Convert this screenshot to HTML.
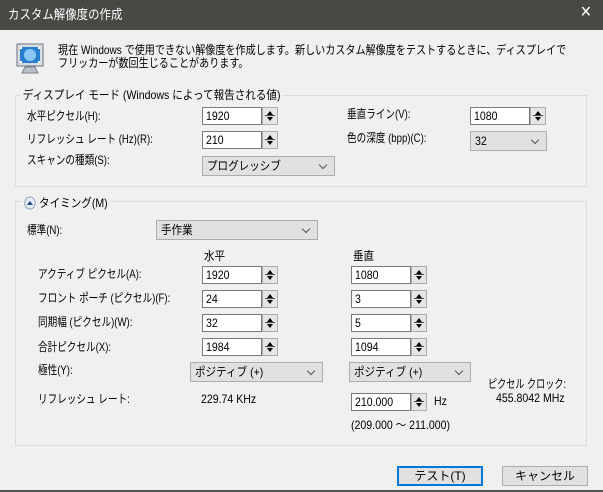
<!DOCTYPE html>
<html><head><meta charset="utf-8"><style>
*{margin:0;padding:0;box-sizing:border-box}
body{width:603px;height:492px;background:#f0f0f0;font-family:"Liberation Sans","Noto Sans CJK JP",sans-serif;font-size:12px;color:#000;position:relative;overflow:hidden}
.a{position:absolute;white-space:nowrap;line-height:14px;transform:scaleX(.88);transform-origin:left}
.n{transform:scaleX(.8)}
.tb{position:absolute;left:0;top:0;width:603px;height:30px;background:#4a4845;color:#fff;font-size:13px}
.grp{position:absolute;border:1px solid #dcdcdc}
.in{position:absolute;background:#fff;border:1px solid #7a7a7a;height:18px;padding-left:3px;line-height:16px}
.in span,.cb span{display:inline-block;transform:scaleX(.88);transform-origin:left}
.sp{position:absolute;width:16px;height:18px;border:1px solid #adadad;background:#e5e5e5}
.sp:before{content:"";position:absolute;left:4px;top:3px;border-left:3px solid transparent;border-right:3px solid transparent;border-bottom:4px solid #000}
.sp:after{content:"";position:absolute;left:4px;top:9px;border-left:3px solid transparent;border-right:3px solid transparent;border-top:4px solid #000}
.sp i{position:absolute;left:2px;right:2px;top:7px;height:1px;background:#444}
.cb{position:absolute;background:#e1e1e1;border:1px solid #adadad;height:20px;padding-left:4px;line-height:18px}
.cb:after{content:"";position:absolute;right:8px;top:5px;width:5px;height:5px;border-right:1px solid #555;border-bottom:1px solid #555;transform:rotate(45deg)}
.btn{position:absolute;height:20px;background:#e1e1e1;border:1px solid #adadad;text-align:center;line-height:18px}
</style></head><body>
<div class="tb"><span class="a" style="left:8px;top:8px">カスタム解像度の作成</span>
<span class="a" style="left:580px;top:6px;font-size:16px">✕</span></div>

<svg style="position:absolute;left:15px;top:43px" width="32" height="34" viewBox="0 0 32 34">
<rect x="2" y="1" width="26" height="22" fill="#d8dde2" stroke="#6b7580"/>
<rect x="5" y="4" width="20" height="16" fill="#2b7fd0"/>
<circle cx="15" cy="12" r="6" fill="#8cc8f5"/>
<rect x="5" y="4" width="2" height="2" fill="#fff"/><rect x="23" y="4" width="2" height="2" fill="#fff"/>
<rect x="5" y="18" width="2" height="2" fill="#fff"/><rect x="23" y="18" width="2" height="2" fill="#fff"/>
<path d="M10 24 L20 24 L23 30 L7 30 Z" fill="#b7bec6" stroke="#7d858e"/>
</svg>
<div class="a" style="left:58px;top:43px;transform:scaleX(.84)">現在 Windows で使用できない解像度を作成します。新しいカスタム解像度をテストするときに、ディスプレイで</div>
<div class="a" style="left:58px;top:56px;transform:scaleX(.84)">フリッカーが数回生じることがあります。</div>

<div class="grp" style="left:15px;top:95px;width:572px;height:92px"></div>
<div class="a" style="left:21px;top:88px;background:#f0f0f0;padding:0 2px">ディスプレイ モード (Windows によって報告される値)</div>
<div class="a n" style="left:27px;top:109px">水平ピクセル(H):</div>
<div class="in" style="left:202px;top:107px;width:60px"><span>1920</span></div><div class="sp" style="left:262px;top:107px"><i></i></div>
<div class="a n" style="left:347px;top:107px">垂直ライン(V):</div>
<div class="in" style="left:470px;top:107px;width:60px"><span>1080</span></div><div class="sp" style="left:530px;top:107px"><i></i></div>
<div class="a n" style="left:27px;top:132px">リフレッシュ レート (Hz)(R):</div>
<div class="in" style="left:202px;top:131px;width:60px"><span>210</span></div><div class="sp" style="left:262px;top:131px"><i></i></div>
<div class="a n" style="left:347px;top:131px">色の深度 (bpp)(C):</div>
<div class="cb" style="left:470px;top:131px;width:77px"><span>32</span></div>
<div class="a n" style="left:27px;top:153px">スキャンの種類(S):</div>
<div class="cb" style="left:202px;top:156px;width:133px"><span>プログレッシブ</span></div>

<div class="grp" style="left:15px;top:201px;width:572px;height:245px"></div>
<div class="a" style="left:22px;top:196px;background:#f0f0f0;padding:0 3px 0 2px;height:14px">
<svg width="14" height="14" viewBox="0 0 14 14" style="vertical-align:-3px"><circle cx="7" cy="7" r="6" fill="#e8eef6" stroke="#8aa0bd"/><path d="M3.5 9 L7 5 L10.5 9 Z" fill="#1e4b8e"/></svg> タイミング(M)</div>
<div class="a n" style="left:27px;top:223px">標準(N):</div>
<div class="cb" style="left:156px;top:220px;width:162px"><span>手作業</span></div>

<div class="a" style="left:204px;top:249px">水平</div>
<div class="a" style="left:353px;top:249px">垂直</div>
<div class="a n" style="left:38px;top:267px">アクティブ ピクセル(A):</div>
<div class="a n" style="left:38px;top:291px">フロント ポーチ (ピクセル)(F):</div>
<div class="a n" style="left:38px;top:315px">同期幅 (ピクセル)(W):</div>
<div class="a n" style="left:38px;top:340px">合計ピクセル(X):</div>
<div class="in" style="left:202px;top:266px;width:60px"><span>1920</span></div><div class="sp" style="left:262px;top:266px"><i></i></div>
<div class="in" style="left:202px;top:290px;width:60px"><span>24</span></div><div class="sp" style="left:262px;top:290px"><i></i></div>
<div class="in" style="left:202px;top:314px;width:60px"><span>32</span></div><div class="sp" style="left:262px;top:314px"><i></i></div>
<div class="in" style="left:202px;top:338px;width:60px"><span>1984</span></div><div class="sp" style="left:262px;top:338px"><i></i></div>
<div class="in" style="left:351px;top:266px;width:60px"><span>1080</span></div><div class="sp" style="left:411px;top:266px"><i></i></div>
<div class="in" style="left:351px;top:290px;width:60px"><span>3</span></div><div class="sp" style="left:411px;top:290px"><i></i></div>
<div class="in" style="left:351px;top:314px;width:60px"><span>5</span></div><div class="sp" style="left:411px;top:314px"><i></i></div>
<div class="in" style="left:351px;top:338px;width:60px"><span>1094</span></div><div class="sp" style="left:411px;top:338px"><i></i></div>
<div class="a n" style="left:38px;top:363px">極性(Y):</div>
<div class="cb" style="left:190px;top:362px;width:133px"><span>ポジティブ (+)</span></div>
<div class="cb" style="left:349px;top:362px;width:122px"><span>ポジティブ (+)</span></div>
<div class="a n" style="left:38px;top:392px">リフレッシュ レート:</div>
<div class="a" style="left:201px;top:392px">229.74 KHz</div>
<div class="in" style="left:351px;top:393px;width:60px"><span>210.000</span></div><div class="sp" style="left:411px;top:393px"><i></i></div>
<div class="a" style="left:434px;top:394px">Hz</div>
<div class="a" style="left:351px;top:418px">(209.000 ～ 211.000)</div>
<div class="a" style="left:488px;top:377px;transform:scaleX(.76)">ピクセル クロック:</div>
<div class="a" style="left:496px;top:391px">455.8042 MHz</div>

<div class="btn" style="left:397px;top:466px;width:86px;border:2px solid #0078d7;line-height:16px">テスト(T)</div>
<div class="btn" style="left:502px;top:466px;width:86px">キャンセル</div>
<div style="position:absolute;left:0;top:490px;width:603px;height:2px;background:#555"></div>
</body></html>
